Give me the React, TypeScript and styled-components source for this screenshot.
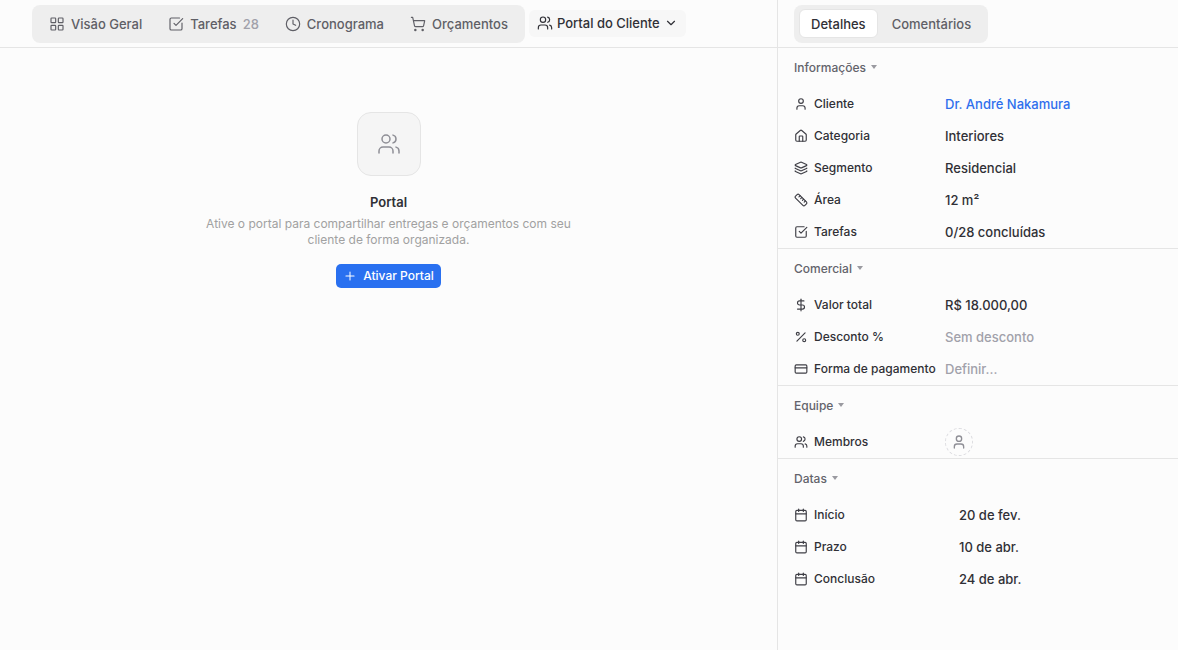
import React from 'react';
import styled, { createGlobalStyle } from 'styled-components';
import {
  Calendar,
  ChevronDown,
  Clock,
  CreditCard,
  DollarSign,
  House,
  Layers,
  LayoutGrid,
  Percent,
  Plus,
  Ruler,
  ShoppingCart,
  SquareCheckBig,
  User,
  Users,
} from 'lucide-react';

const GlobalStyle = createGlobalStyle`
  html, body, #root {
    height: 100%;
    margin: 0;
  }
  body {
    background: #fcfcfc;
    color: #303036;
    font-family: Inter, "Liberation Sans", sans-serif;
    overflow: hidden;
  }
  * {
    box-sizing: border-box;
  }
`;

const App: React.FC = () => {
  return (
    <Root>
      <GlobalStyle />
      <Main>
        <Header>
          <TabGroup>
            <Tab>
              <LayoutGrid size={16} strokeWidth={1.75} />
              <span>Visão Geral</span>
            </Tab>
            <Tab>
              <SquareCheckBig size={16} strokeWidth={1.75} />
              <span>Tarefas</span>
              <Count>28</Count>
            </Tab>
            <Tab>
              <Clock size={16} strokeWidth={1.75} />
              <span>Cronograma</span>
            </Tab>
            <Tab>
              <ShoppingCart size={16} strokeWidth={1.75} />
              <span>Orçamentos</span>
            </Tab>
          </TabGroup>
          <ActiveTab>
            <Users size={16} strokeWidth={1.75} />
            <span>Portal do Cliente</span>
            <ChevronDown size={14} strokeWidth={2} />
          </ActiveTab>
        </Header>
        <Empty>
          <EmptyIcon>
            <Users size={24} strokeWidth={1.5} />
          </EmptyIcon>
          <EmptyTitle>Portal</EmptyTitle>
          <EmptyText>
            Ative o portal para compartilhar entregas e orçamentos com seu cliente de forma organizada.
          </EmptyText>
          <PrimaryButton>
            <Plus size={14} strokeWidth={1.75} />
            <span>Ativar Portal</span>
          </PrimaryButton>
        </Empty>
      </Main>
      <Side>
        <SideHeader>
          <SideTabs>
            <SideTab $active>Detalhes</SideTab>
            <SideTab>Comentários</SideTab>
          </SideTabs>
        </SideHeader>

        <Section>
          <SectionTitle>Informações<Caret /></SectionTitle>
          <Row>
            <Label><User size={14} />Cliente</Label>
            <Value $tone="link">Dr. André Nakamura</Value>
          </Row>
          <Row>
            <Label><House size={14} />Categoria</Label>
            <Value>Interiores</Value>
          </Row>
          <Row>
            <Label><Layers size={14} />Segmento</Label>
            <Value>Residencial</Value>
          </Row>
          <Row>
            <Label><Ruler size={14} />Área</Label>
            <Value>12 m²</Value>
          </Row>
          <Row>
            <Label><SquareCheckBig size={14} />Tarefas</Label>
            <Value>0/28 concluídas</Value>
          </Row>
        </Section>

        <Section>
          <SectionTitle>Comercial<Caret /></SectionTitle>
          <Row>
            <Label><DollarSign size={14} />Valor total</Label>
            <Value>R$ 18.000,00</Value>
          </Row>
          <Row>
            <Label><Percent size={14} />Desconto %</Label>
            <Value $tone="muted">Sem desconto</Value>
          </Row>
          <Row>
            <Label><CreditCard size={14} />Forma de pagamento</Label>
            <Value $tone="muted">Definir...</Value>
          </Row>
        </Section>

        <Section>
          <SectionTitle>Equipe<Caret /></SectionTitle>
          <Row>
            <Label><Users size={14} />Membros</Label>
            <MemberSlot><User size={16} /></MemberSlot>
          </Row>
        </Section>

        <LastSection>
          <SectionTitle>Datas<Caret /></SectionTitle>
          <Row>
            <Label><Calendar size={14} />Início</Label>
            <DateValue>20 de fev.</DateValue>
          </Row>
          <Row>
            <Label><Calendar size={14} />Prazo</Label>
            <DateValue>10 de abr.</DateValue>
          </Row>
          <Row>
            <Label><Calendar size={14} />Conclusão</Label>
            <DateValue>24 de abr.</DateValue>
          </Row>
        </LastSection>
      </Side>
    </Root>
  );
};

export default App;

const Root = styled.div`
  display: flex;
  width: 100%;
  height: 100%;
`;

const Main = styled.div`
  flex: 1;
  min-width: 0;
  display: flex;
  flex-direction: column;
`;

const Header = styled.div`
  display: flex;
  align-items: center;
  gap: 4px;
  height: 48px;
  padding: 0 0 0 32px;
  border-bottom: 1px solid #e5e5e5;
`;

const TabGroup = styled.div`
  display: flex;
  align-items: center;
  gap: 2px;
  height: 38px;
  padding: 0 5px;
  border-radius: 8px;
  background: #eeeeee;
`;

const Tab = styled.button`
  display: inline-flex;
  align-items: center;
  gap: 6px;
  height: 28px;
  padding: 0 12px;
  border: none;
  background: none;
  color: #5f5f66;
  font-family: inherit;
  font-size: 13px;
  font-weight: 500;
  white-space: nowrap;
`;

const Count = styled.span`
  color: #a1a1aa;
`;

const ActiveTab = styled.button`
  display: inline-flex;
  align-items: center;
  gap: 4px;
  height: 27px;
  margin-top: -1px;
  padding: 0 8px;
  border: none;
  border-radius: 6px;
  background: #f7f7f7;
  color: #303036;
  font-family: inherit;
  font-size: 13px;
  font-weight: 500;
  white-space: nowrap;
`;

const Empty = styled.div`
  display: flex;
  flex-direction: column;
  align-items: center;
  padding-top: 64px;
`;

const EmptyIcon = styled.div`
  display: flex;
  align-items: center;
  justify-content: center;
  width: 64px;
  height: 64px;
  border: 1px solid #e5e5e5;
  border-radius: 14px;
  background: #f5f5f5;
  color: #8f8f96;
`;

const EmptyTitle = styled.h2`
  margin: 16px 0 0;
  font-size: 13px;
  font-weight: 600;
  line-height: 20px;
  color: #303036;
`;

const EmptyText = styled.p`
  width: 384px;
  margin: 4px 0 0;
  color: #a1a1a1;
  font-size: 12px;
  line-height: 16px;
  text-align: center;
`;

const PrimaryButton = styled.button`
  display: inline-flex;
  align-items: center;
  gap: 6px;
  height: 24px;
  margin-top: 16px;
  padding: 0 7px 1px;
  border: none;
  border-radius: 5px;
  background: #2970f0;
  color: #fff;
  font-family: inherit;
  font-size: 12px;
  font-weight: 500;
`;

const Side = styled.aside`
  flex: 0 0 401px;
  display: flex;
  flex-direction: column;
  border-left: 1px solid #e5e5e5;
`;

const SideHeader = styled.div`
  display: flex;
  align-items: center;
  height: 48px;
  padding-left: 16px;
  border-bottom: 1px solid #e5e5e5;
`;

const SideTabs = styled.div`
  display: flex;
  align-items: center;
  gap: 2px;
  height: 38px;
  padding: 0 5px;
  border-radius: 8px;
  background: #eeeeee;
`;

const SideTab = styled.button<{ $active?: boolean }>`
  height: 29px;
  padding: 0 ${p => (p.$active ? '11px' : '12px')};
  border: ${p => (p.$active ? '1px solid #e5e5e5' : 'none')};
  border-radius: 6px;
  background: ${p => (p.$active ? '#fff' : 'none')};
  color: ${p => (p.$active ? '#303036' : '#5f5f66')};
  font-family: inherit;
  font-size: 13px;
  font-weight: 500;
`;

const Section = styled.section`
  padding: 0 16px;
  border-bottom: 1px solid #e5e5e5;
`;

const LastSection = styled.section`
  padding: 0 16px;
`;

const SectionTitle = styled.div`
  display: flex;
  align-items: center;
  gap: 5px;
  height: 40px;
  padding-bottom: 2px;
  color: #63636b;
  font-size: 12px;
  font-weight: 500;
`;

const Caret = styled.i`
  width: 0;
  height: 0;
  border-left: 3.5px solid transparent;
  border-right: 3.5px solid transparent;
  border-top: 4px solid #9a9aa0;
`;

const Row = styled.div`
  display: flex;
  align-items: center;
  height: 32px;
`;

const Label = styled.div`
  flex: 0 0 151px;
  display: flex;
  align-items: center;
  gap: 6px;
  margin-top: -1px;
  color: #303036;
  font-size: 12px;
  font-weight: 500;
  white-space: nowrap;

  & > svg {
    color: #3f3f46;
  }
`;

const toneColors = {
  base: '#303036',
  link: '#2f6fed',
  muted: '#a1a1aa',
};

const Value = styled.div<{ $tone?: 'base' | 'link' | 'muted' }>`
  color: ${p => toneColors[p.$tone ?? 'base']};
  font-size: 13px;
  font-weight: 500;
`;

const DateValue = styled(Value)`
  padding-left: 14px;
`;

const MemberSlot = styled.div`
  display: flex;
  align-items: center;
  justify-content: center;
  width: 28px;
  height: 28px;
  border: 1px dashed #dcdce0;
  border-radius: 50%;
  color: #8f8f96;
`;
